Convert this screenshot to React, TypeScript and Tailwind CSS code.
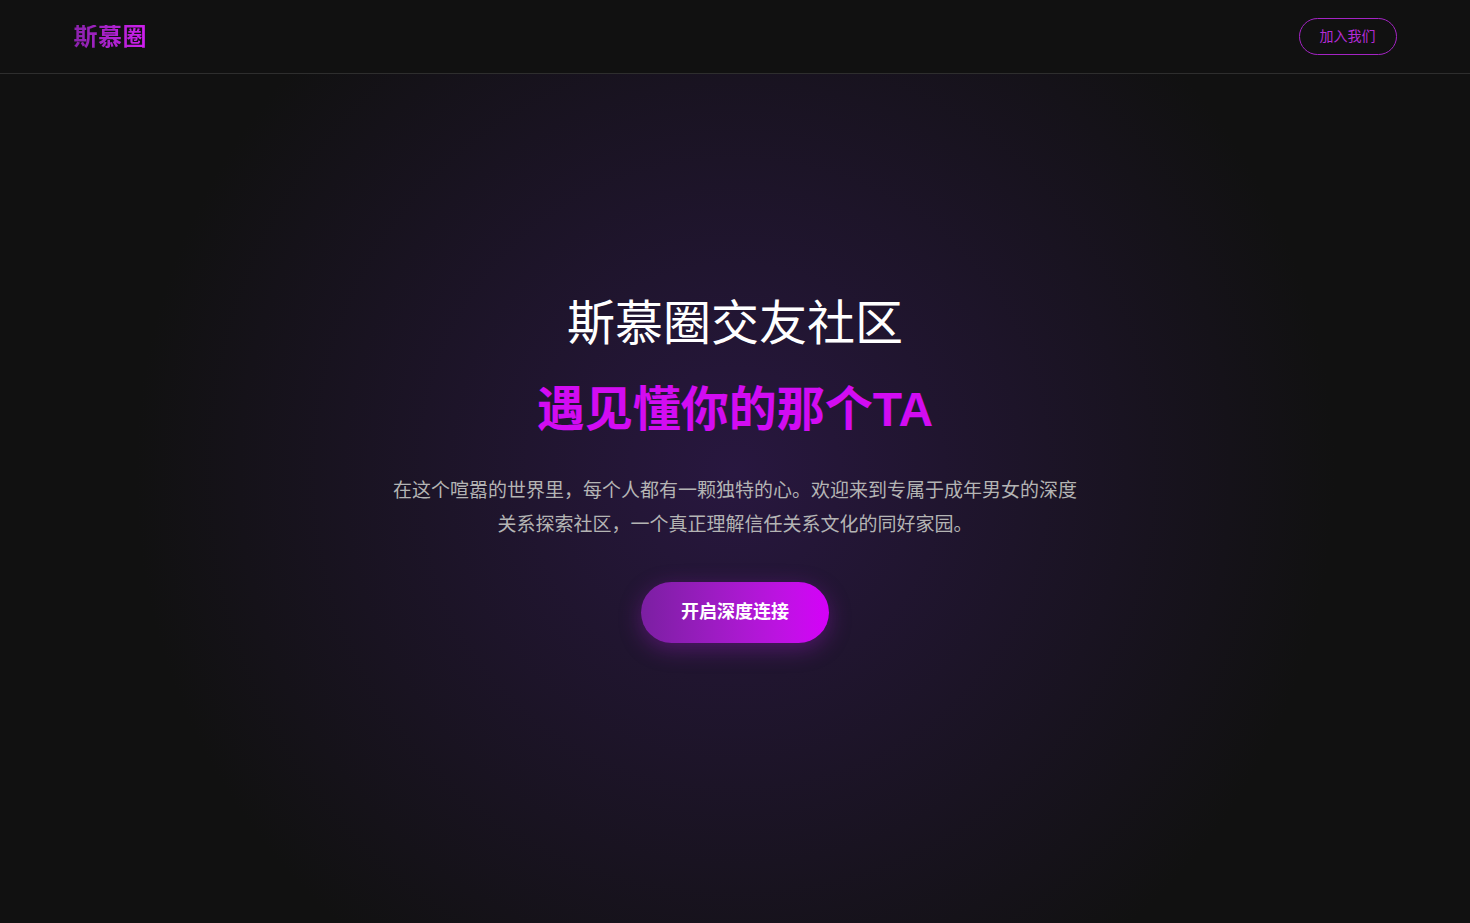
import React from "react";

const FONT = '"Liberation Sans", "Noto Sans CJK SC", sans-serif';

export default function App() {
  return (
    <div className="min-h-screen w-full bg-[#111111] text-white" style={{ fontFamily: FONT }}>
      <header className="flex h-[74px] items-center justify-between border-b border-[#2e2e2e] bg-[#111111] px-[5%]">
        <div className="bg-gradient-to-r from-[#8a22ac] to-[#d01ef0] bg-clip-text text-[24px] font-bold leading-none tracking-[0.5px] text-transparent">
          斯慕圈
        </div>
        <button className="flex h-[37px] items-center rounded-full border border-[#a424c4] px-5 text-[14px] text-[#b52cd6]">
          加入我们
        </button>
      </header>
      <section className="flex h-[849px] flex-col items-center bg-[radial-gradient(circle_600px_at_50%_47%,#28173f_0%,#111111_100%)] pt-[221px] text-center">
        <h1 className="text-[48px] font-normal leading-[58px] text-white">斯慕圈交友社区</h1>
        <h2 className="mt-[28px] text-[48px] font-bold leading-[58px] text-[#d20cf2]">遇见懂你的那个TA</h2>
        <p className="mt-[35px] max-w-[700px] text-[19px] leading-[34px] text-[#b4b4b4]">
          在这个喧嚣的世界里，每个人都有一颗独特的心。欢迎来到专属于成年男女的深度关系探索社区，一个真正理解信任关系文化的同好家园。
        </p>
        <button className="mt-[40px] flex h-[61px] w-[188px] items-center justify-center rounded-full bg-gradient-to-r from-[#7b1fa2] to-[#d500f9] text-[18px] font-bold text-white shadow-[0_6px_22px_rgba(170,30,210,0.35)]">
          开启深度连接
        </button>
      </section>
    </div>
  );
}
